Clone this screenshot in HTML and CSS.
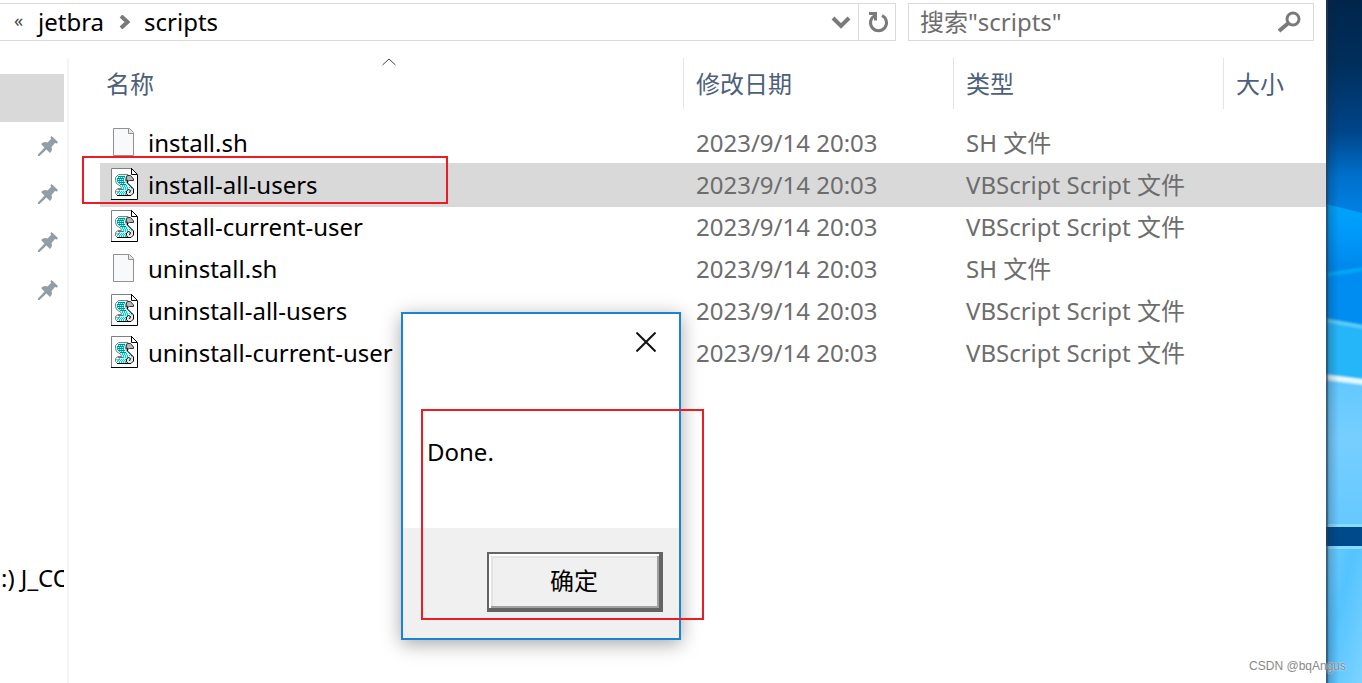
FILE: index.html
```
<!DOCTYPE html>
<html lang="zh-CN">
<head>
<meta charset="utf-8">
<meta name="viewport" content="width=device-width, initial-scale=1">
<title>scripts</title>
<link rel="stylesheet" href="styles.css">
</head>
<body>

<!-- shared icons -->
<svg class="defs" aria-hidden="true">
	<symbol id="pin" viewBox="0 0 20 20">
		<path fill="#929ea5" d="M13.500 0L20 6L19 7.500L17 7L13.500 11Q15 14 12 17L8.500 13.500L1.500 20L0 20L0 18.500L6.500 11.500L3 8Q6 5 9.500 6.500L13 3L12.500 1Z"/>
	</symbol>
	<symbol id="file" viewBox="0 0 27 32">
		<path fill="#f8f9fa" stroke="#919191" d="M2.500 2.500H18.500L22.500 6.500V29.500H2.500Z"/>
		<path fill="#e4e4e4" stroke="#919191" d="M17.500 2.500V7.500H22.500"/>
	</symbol>
	<symbol id="vbs" viewBox="0 0 27 32">
		<path fill="#fff" d="M0 0H20L27 7V32H0Z"/>
		<path fill="none" stroke="#808080" d="M.5 31V.5H20"/>
		<path fill="none" stroke="#000" d="M20.500 0V6.500H26M20.500 .5L26.500 6.500V31.500H0"/>
		<path fill="#c4ffff" stroke="#808080" d="M7.500 6.500H17L15.500 8.500L14.500 12.500L16.500 15.500L20.500 19V22L18 27.500H6.500L4.500 25.500V22.500L7 20.500H10.500L10 18.500L5.500 15.500L4.500 12.500V9.500Z"/>
		<path stroke="#008c8c" d="M7 8.500H14M6 10.500H13M6 12.500H13M7 14.500H14M9 16.500H15"/>
		<path stroke="#00d0d0" stroke-dasharray="1 1" d="M7 9.500H14M6 11.500H13M6 13.500H13M8 15.500H14M11 17.500H17M11 18.500H17M12 19.500H19M12 20.500H18M12 21.500H17M8 23.500H16M7 24.500H15M6 25.500H15M8 26.500H16"/>
		<path fill="#fff" stroke="#707070" d="M7 21.500H12M5.500 23L7 24.500L8.500 22.500"/>
		<path fill="#b8b8b8" stroke="#333" d="M16.500 7.500H19.500L22.500 11V12.500H18.500L16.500 13.500V12L15 12.500L15.500 9Z"/>
		<path fill="#e8e8e8" stroke="#000" d="M21 19.500L22.500 21V25L20 27.500H17L15.500 25.500V23L17.500 21.500L19.500 22.500L18.500 25"/>
		<path fill="none" stroke="#000" d="M16.500 13V15L21.500 20M6 27.500H19"/>
	</symbol>
</svg>

<div class="explorer">
	<div class="toolbar">
		<div class="address">
			<span class="more">«</span>
			<a href="#">jetbra</a>
			<svg class="sep" viewBox="0 0 12 14"><path d="M2 1L8.500 7L2 13"/></svg>
			<a href="#">scripts</a>
			<button class="drop" aria-label="history">
				<svg width="20" height="14" viewBox="0 0 20 14"><path d="M2 3L10 11L18 3"/></svg>
			</button>
			<button class="reload" aria-label="refresh">
				<svg width="22" height="22" viewBox="0 0 22 22"><path d="M2 2.500H8.500V9.500M8 4.500A8 8 0 1 0 15 4.500"/></svg>
			</button>
		</div>
		<div class="search">
			<input type="text" aria-label="search" placeholder='搜索"scripts"'>
			<svg width="24" height="22" viewBox="0 0 24 22"><circle cx="15" cy="8" r="6"/><path d="M10.500 12L1 20"/></svg>
		</div>
	</div>

	<div class="content">
		<div class="side">
			<div class="item on"></div>
			<div class="item"><svg><use href="#pin"/></svg></div>
			<div class="item"><svg><use href="#pin"/></svg></div>
			<div class="item"><svg><use href="#pin"/></svg></div>
			<div class="item"><svg><use href="#pin"/></svg></div>
			<div class="item drive">:) J_CO</div>
		</div>

		<table class="files">
			<colgroup>
				<col class="cName"><col class="cDate"><col class="cType"><col>
			</colgroup>
			<thead>
				<tr>
					<th>名称<svg class="asc" viewBox="0 0 14 8"><path d="M.5 7L7 1L13.500 7"/></svg></th>
					<th>修改日期</th>
					<th>类型</th>
					<th>大小</th>
				</tr>
			</thead>
			<tbody>
				<tr><td><svg><use href="#file"/></svg>install.sh</td><td>2023/9/14 20:03</td><td>SH 文件</td><td></td></tr>
				<tr class="sel"><td><svg><use href="#vbs"/></svg>install-all-users</td><td>2023/9/14 20:03</td><td>VBScript Script 文件</td><td></td></tr>
				<tr><td><svg><use href="#vbs"/></svg>install-current-user</td><td>2023/9/14 20:03</td><td>VBScript Script 文件</td><td></td></tr>
				<tr><td><svg><use href="#file"/></svg>uninstall.sh</td><td>2023/9/14 20:03</td><td>SH 文件</td><td></td></tr>
				<tr><td><svg><use href="#vbs"/></svg>uninstall-all-users</td><td>2023/9/14 20:03</td><td>VBScript Script 文件</td><td></td></tr>
				<tr><td><svg><use href="#vbs"/></svg>uninstall-current-user</td><td>2023/9/14 20:03</td><td>VBScript Script 文件</td><td></td></tr>
			</tbody>
		</table>
	</div>
</div>

<!-- wallpaper strip -->
<div class="desktop">
	<svg viewBox="0 0 36 683" preserveAspectRatio="none">
		<defs>
			<linearGradient id="sky" x1="0" y1="0" x2="0" y2="1">
				<stop offset="0" stop-color="#00254b"/>
				<stop offset=".3" stop-color="#002f5c"/>
				<stop offset=".6" stop-color="#00458a"/>
				<stop offset=".8" stop-color="#0070cc"/>
				<stop offset="1" stop-color="#0084e8"/>
			</linearGradient>
			<linearGradient id="mid" x1="0" y1="0" x2="0" y2="1">
				<stop offset="0" stop-color="#00a2f8"/>
				<stop offset=".3" stop-color="#009dfc"/>
				<stop offset="1" stop-color="#0084ea"/>
			</linearGradient>
			<linearGradient id="low" x1="0" y1="0" x2="0" y2="1">
				<stop offset="0" stop-color="#62c8ff"/>
				<stop offset=".4" stop-color="#76ceff"/>
				<stop offset="1" stop-color="#64c8ff"/>
			</linearGradient>
			<linearGradient id="floor" x1="0" y1="0" x2="1" y2="1">
				<stop offset="0" stop-color="#6ccdff"/>
				<stop offset=".4" stop-color="#54c3ff"/>
				<stop offset="1" stop-color="#7cd3ff"/>
			</linearGradient>
			<linearGradient id="shade">
				<stop offset="0" stop-color="#123" stop-opacity=".5"/>
				<stop offset=".3" stop-color="#123" stop-opacity=".2"/>
				<stop offset="1" stop-color="#123" stop-opacity="0"/>
			</linearGradient>
			<filter id="soft"><feGaussianBlur stdDeviation="0.8"/></filter>
		</defs>
		<rect width="36" height="220" fill="url(#sky)"/>
		<path fill="url(#mid)" d="M0 204L36 213V275H0Z"/>
		<path fill="#008df2" d="M0 275L36 270V330H0Z"/>
		<path fill="#25b6f9" d="M0 320L36 327V390H0Z"/>
		<path fill="url(#low)" d="M0 379L36 384V530H0Z"/>
		<g fill="none" filter="url(#soft)">
			<path stroke="#00a9f5" stroke-width="4" d="M-2 275L38 269"/>
			<path stroke="#5fcbf8" stroke-width="4" d="M-2 320L38 327"/>
			<path stroke="#e6f8ff" stroke-width="6" d="M-2 377L38 382"/>
		</g>
		<rect y="524" width="36" height="25" fill="#8adaff"/>
		<rect y="527" width="36" height="19" fill="#004a8b"/>
		<rect y="549" width="36" height="134" fill="url(#floor)"/>
		<rect width="13" height="683" fill="url(#shade)"/>
		<rect width="2" height="683" fill="#345" fill-opacity=".5"/>
	</svg>
</div>

<div class="dialog" role="dialog" aria-label="Done">
	<div class="dTop">
		<button class="close" aria-label="close">
			<svg width="20" height="20" viewBox="0 0 20 20"><path d="M.5 .5L19.500 19.500M19.500 .5L.5 19.500"/></svg>
		</button>
	</div>
	<p class="msg">Done.</p>
	<div class="dBottom"><button class="ok">确定</button></div>
</div>

<div class="mark markFile"></div>
<div class="mark markDone"></div>
<div class="credit">CSDN @bqAngus</div>

</body>
</html>
```
FILE: styles.css
```
*{
	box-sizing:border-box;
}
body{
	margin:0;
	display:flex;
	min-height:100vh;
	position:relative;
	overflow:hidden;
	background:#fff;
	color:#000;
	font-family:"Noto Sans","Noto Sans CJK SC",sans-serif;
	font-size:24px;
	line-height:36px;
}
button{
	font:inherit;
	padding:0;
	border:0;
	background:none;
}
svg{
	display:block;
	flex:none;
}
.defs{
	position:absolute;
	width:0;
	height:0;
}
.explorer{
	flex:1;
	min-width:0;
	display:flex;
	flex-direction:column;
}

/* address + search */
.toolbar{
	display:flex;
	gap:12px;
	padding:3px 12px 0 0;
}
.address{
	flex:1;
	display:flex;
	align-items:center;
	height:38px;
	padding-left:14px;
	border:1px solid #d9d9d9;
	border-left:0;
}
.address a{
	color:#000;
	text-decoration:none;
}
.more{
	width:24px;
	font-size:18px;
	line-height:20px;
	padding-bottom:4px;
	color:#444;
}
.sep{
	width:12px;
	height:14px;
	margin:0 13px 0 15px;
}
.toolbar path, .toolbar circle{
	fill:none;
	stroke:#7a7a7a;
	stroke-width:4;
}
.toolbar circle, .reload path{
	stroke-width:3;
}
.drop{
	margin-left:auto;
	padding:0 7px;
}
.reload{
	align-self:stretch;
	width:37px;
	padding-left:8px;
	border-left:1px solid #d9d9d9;
}
.search{
	display:flex;
	align-items:center;
	width:406px;
	height:38px;
	padding:0 11px;
	border:1px solid #d9d9d9;
}
.search input{
	flex:1;
	min-width:0;
	padding:0;
	border:0;
	outline:0;
	background:none;
	font:inherit;
}
.search input::placeholder{
	color:#6d6d6d;
	opacity:1;
}

.content{
	flex:1;
	display:flex;
	align-items:flex-start;
	padding-top:17px;
}
.side{
	align-self:stretch;
	width:69px;
	padding:16px 3px 0 0;
	border-right:2px solid #f5f5f5;
}
.item{
	display:flex;
	align-items:center;
	justify-content:flex-end;
	height:48px;
	padding-right:6px;
}
.item svg{
	width:20px;
	height:20px;
}
.on{
	background:#d9d9d9;
}
.drive{
	justify-content:flex-start;
	margin-top:240px;
	padding:0 0 0 1px;
	overflow:hidden;
	white-space:nowrap;
}

/* file list */
.files{
	flex:1;
	margin-left:31px;
	table-layout:fixed;
	border-collapse:separate;
	border-spacing:0;
	white-space:nowrap;
}
.cName{
	width:583px;
}
.cDate, .cType{
	width:270px;
}
.files th{
	position:relative;
	height:51px;
	padding:0 0 0 12px;
	border-left:1px solid #e5e5e5;
	text-align:left;
	font-weight:normal;
	color:#4c607a;
}
.files th:first-child{
	padding-left:6px;
	border-left:0;
}
.asc{
	position:absolute;
	left:282px;
	top:0;
	width:14px;
	height:8px;
	fill:none;
	stroke:#444;
}
.files tbody::before{
	content:"";
	display:block;
	height:13px;
}
.files td{
	height:42px;
	padding:0 0 0 13px;
	color:#6d6d6d;
}
.files td:first-child{
	display:flex;
	align-items:center;
	gap:10px;
	padding-left:11px;
	color:#000;
}
.files td svg{
	width:27px;
	height:32px;
	margin-bottom:2px;
}
.sel td{
	background:#d9d9d9;
	box-shadow:0 1px #d9d9d9, 0 -1px #d9d9d9;
}

.desktop{
	width:36px;
	height:100vh;
}
.desktop svg{
	width:100%;
	height:100%;
}

/* message box */
.dialog{
	position:absolute;
	left:401px;
	top:312px;
	width:280px;
	background:#fff;
	border:2px solid #1883d7;
	box-shadow:0 4px 18px rgba(0,0,0,.35);
}
.dTop{
	display:flex;
	justify-content:flex-end;
	padding:18px 23px 0 0;
}
.close path{
	stroke:#111;
	stroke-width:2;
}
.msg{
	margin:0;
	padding:82px 24px 58px;
}
.dBottom{
	display:flex;
	justify-content:flex-end;
	padding:24px 16px 26px;
	background:#f0f0f0;
}
.ok{
	width:176px;
	height:60px;
	border:2px solid #646464;
	border-right-width:4px;
	border-bottom-width:4px;
	background:#f0f0f0;
	box-shadow:inset 2px 2px #fff, inset -2px -2px #a0a0a0, inset 4px 4px #e3e3e3;
}

.mark{
	position:absolute;
	border:2px solid #ed1c24;
	pointer-events:none;
}
.markFile{
	left:82px;
	top:156px;
	width:366px;
	height:48px;
}
.markDone{
	left:421px;
	top:409px;
	width:283px;
	height:211px;
}
.credit{
	position:absolute;
	right:16px;
	bottom:8px;
	font-family:"Liberation Sans",sans-serif;
	font-size:12px;
	line-height:18px;
	color:#888;
	text-shadow:0 0 2px #fff;
}
```
